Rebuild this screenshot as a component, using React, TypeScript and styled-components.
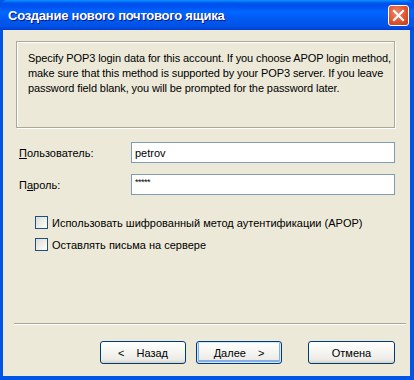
import styled, { createGlobalStyle, css } from "styled-components";

const GlobalStyle = createGlobalStyle`
  html, body {
    margin: 0;
    padding: 0;
    background: #ece9d8;
  }
  * {
    box-sizing: border-box;
  }
`;

const FONT = `"Liberation Sans", Arial, sans-serif`;

const infoLines = [
  "Specify POP3 login data for this account. If you choose APOP login method,",
  "make sure that this method is supported by your POP3 server. If you leave",
  "password field blank, you will be prompted for the password later.",
];

export default function App() {
  return (
    <>
      <GlobalStyle />
      <Window>
        <TitleBar>
          <Title>Создание нового почтового ящика</Title>
          <CloseButton aria-label="Закрыть">
            <svg width="13" height="13" viewBox="0 0 13 13">
              <path
                d="M2 2 L11 11 M11 2 L2 11"
                stroke="#fff"
                strokeWidth="2.2"
                strokeLinecap="square"
              />
            </svg>
          </CloseButton>
        </TitleBar>
        <Body>
          <InfoBox>
            {infoLines.map((line) => (
              <InfoLine key={line}>{line}</InfoLine>
            ))}
          </InfoBox>

          <Fields>
            <FieldRow>
              <Label>
                <u>П</u>ользователь:
              </Label>
              <Input defaultValue="petrov" />
            </FieldRow>
            <FieldRow>
              <Label>
                П<u>а</u>роль:
              </Label>
              <Input $masked defaultValue="*****" />
            </FieldRow>
          </Fields>

          <Options>
            <CheckRow>
              <CheckBox />
              Использовать шифрованный метод аутентификации (APOP)
            </CheckRow>
            <CheckRow>
              <CheckBox />
              Оставлять письма на сервере
            </CheckRow>
          </Options>

          <Separator />

          <Buttons>
            <Button>
              <Arrow>&lt;</Arrow>Назад
            </Button>
            <Button $isDefault>
              Далее<Arrow $right>&gt;</Arrow>
            </Button>
            <Button $gap>Отмена</Button>
          </Buttons>
        </Body>
      </Window>
    </>
  );
}

const Window = styled.div`
  width: 414px;
  height: 380px;
  display: flex;
  flex-direction: column;
  background: #0055e5;
  padding: 0 4px 4px 3px;
  font-family: ${FONT};
  font-size: 11px;
  color: #000;
`;

const TitleBar = styled.div`
  height: 30px;
  margin: 0 -4px 0 -3px;
  padding: 0 5px 0 8px;
  display: flex;
  align-items: center;
  justify-content: space-between;
  border-radius: 7px 7px 0 0;
  background: linear-gradient(
    to bottom,
    #0997ff 0px,
    #0053ee 3px,
    #0050ee 6px,
    #0066ff 12px,
    #0058f0 20px,
    #0054e6 26px,
    #003dd7 30px
  );
`;

const Title = styled.span`
  font-family: ${FONT};
  font-weight: 700;
  font-size: 13px;
  letter-spacing: -0.25px;
  color: #fff;
  text-shadow: 1px 1px 0 #0a1883;
  padding-top: 1px;
`;

const CloseButton = styled.button`
  width: 21px;
  height: 21px;
  padding: 0;
  display: flex;
  align-items: center;
  justify-content: center;
  border: 1px solid #fff;
  border-radius: 3px;
  background: radial-gradient(
    circle at 40% 35%,
    #f08a6b 0%,
    #e0552f 55%,
    #c23a17 100%
  );
  margin-top: 1px;
`;

const Body = styled.div`
  flex: 1;
  display: flex;
  flex-direction: column;
  background: #ece9d8;
  padding: 11px 15px 0 13px;
`;

const InfoBox = styled.div`
  height: 87px;
  padding: 9px 4px 0 11px;
  border: 1px solid #aca899;
  box-shadow: 1px 1px 0 #fff, inset 1px 1px 0 #fff;
`;

const InfoLine = styled.div`
  line-height: 15px;
  white-space: nowrap;
  letter-spacing: -0.1px;
`;

const Fields = styled.div`
  display: flex;
  flex-direction: column;
  gap: 11px;
  margin-top: 14px;
  padding-left: 3px;
`;

const FieldRow = styled.div`
  display: flex;
  align-items: center;
`;

const Label = styled.label`
  width: 112px;
  u {
    text-decoration: underline;
  }
`;

const Input = styled.input<{ $masked?: boolean }>`
  flex: 1;
  height: 21px;
  border: 1px solid #7f9db9;
  background: #fff;
  padding: 0 3px;
  font-family: ${FONT};
  font-size: 11px;
  outline: none;
  ${({ $masked }) =>
    $masked &&
    css`
      font-size: 9px;
      padding-bottom: 6px;
      letter-spacing: -0.5px;
    `}
`;

const Options = styled.div`
  display: flex;
  flex-direction: column;
  gap: 9px;
  margin-top: 21px;
  padding-left: 19px;
`;

const CheckRow = styled.label`
  display: flex;
  align-items: center;
  gap: 4px;
  height: 13px;
`;

const CheckBox = styled.span`
  width: 13px;
  height: 13px;
  border: 1px solid #1c5180;
  background: linear-gradient(135deg, #dcdcd7 0%, #f5f4ef 70%, #fff 100%);
`;

const Separator = styled.div`
  margin: auto -11px 0 -2px;
  height: 2px;
  border-top: 1px solid #aca899;
  border-bottom: 1px solid #fff;
`;

const Buttons = styled.div`
  display: flex;
  justify-content: flex-end;
  gap: 10px;
  padding: 16px 0 12px;
`;

const Button = styled.button<{ $isDefault?: boolean; $gap?: boolean }>`
  width: 86px;
  height: 23px;
  display: flex;
  align-items: center;
  justify-content: center;
  padding: 0;
  font-family: ${FONT};
  font-size: 11px;
  color: #000;
  border: 1px solid #003c74;
  border-radius: 3px;
  background: linear-gradient(
    to bottom,
    #ffffff 0%,
    #f4f4f0 50%,
    #ecebe6 85%,
    #d6d0c5 100%
  );
  ${({ $isDefault }) =>
    $isDefault &&
    css`
      box-shadow: inset 0 0 0 1px #cee7ff, inset 0 -1px 0 2px #89ade4;
    `}
  ${({ $gap }) =>
    $gap &&
    css`
      width: 87px;
      margin-left: 16px;
    `}
`;

const Arrow = styled.span<{ $right?: boolean }>`
  ${({ $right }) => ($right ? "margin-left: 12px;" : "margin-right: 12px;")}
`;
